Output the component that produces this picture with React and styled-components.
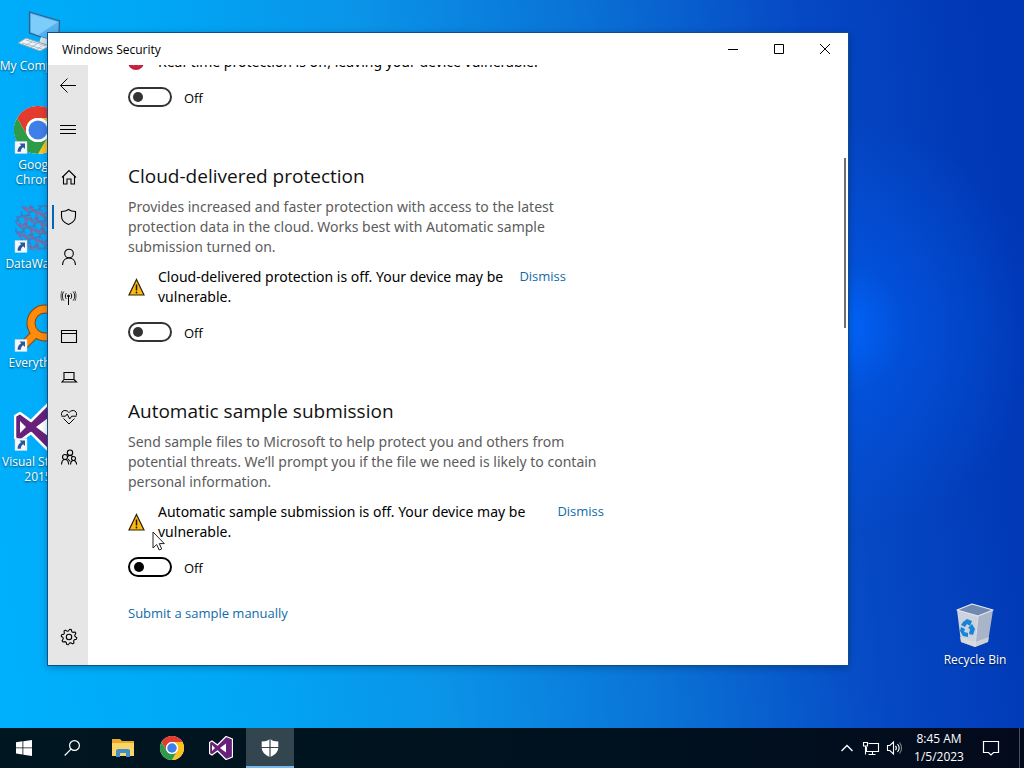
import React from "react";
import styled, { createGlobalStyle, css } from "styled-components";

const GlobalStyle = createGlobalStyle`
  *, *::before, *::after { box-sizing: border-box; }
  html, body { margin: 0; padding: 0; }
  body { font-family: "Open Sans", "Noto Sans", sans-serif; color: #000; }
  button { font: inherit; color: inherit; border: 0; padding: 0; background: none; }
  a { text-decoration: none; }
  h2, p { margin: 0; font-weight: 400; }
`;

const Screen = styled.div`
  display: flex;
  flex-direction: column;
  height: 100vh;
  overflow: hidden;
`;

const Desktop = styled.main`
  position: relative;
  flex: 1;
  min-height: 0;
  background:
    radial-gradient(circle at 82% 45%, rgba(0, 104, 255, 0.9) 0, rgba(0, 92, 240, 0.5) 7%, rgba(0, 70, 210, 0) 22%),
    linear-gradient(83deg, #00b0fc 0%, #00a8f6 20%, #0a94e8 40%, #0a72d6 60%, #0648c4 80%, #0037b4 96%);
`;

const IconColumn = styled.div`
  display: flex;
  flex-direction: column;
  width: 76px;
  padding-top: 7px;
`;

const BinSpot = styled.div`
  position: absolute;
  right: 11px;
  bottom: 54px;
  width: 76px;
`;

const DesktopButton = styled.button`
  display: flex;
  flex-direction: column;
  align-items: center;
  gap: 3px;
  width: 100%;
  height: ${(p) => (p.$short ? "73px" : "99px")};
  color: #fff;
  font-size: 12px;
  line-height: 15px;
  white-space: nowrap;
  text-shadow: 0 1px 2px rgba(0, 0, 0, 0.6);
  svg { display: block; flex: none; }
`;

const Window = styled.section`
  position: absolute;
  inset: 33px 176px 63px 48px;
  display: flex;
  flex-direction: column;
  background: #fff;
  box-shadow: 0 0 0 1px #0d4f8c, 0 2px 8px rgba(0, 0, 0, 0.3);
`;

const TitleBar = styled.header`
  display: flex;
  align-items: center;
  height: 32px;
  flex: none;
  padding-left: 14px;
  font-size: 12px;
`;

const Title = styled.span`
  flex: 1;
`;

const CaptionButton = styled.button`
  display: grid;
  place-items: center;
  width: 46px;
  height: 32px;
`;

const Body = styled.div`
  display: flex;
  flex: 1;
  min-height: 0;
`;

const Sidebar = styled.nav`
  display: flex;
  flex-direction: column;
  width: 40px;
  padding-bottom: 8px;
  background: #e6e6e6;
`;

const NavButton = styled.button`
  position: relative;
  display: grid;
  place-items: center;
  width: 40px;
  height: 40px;
  padding-left: ${(p) => (p.$plain ? "0" : "2px")};
  ${(p) => p.$gap && css`margin-top: ${p.$gap};`}
  ${(p) =>
    p.$active &&
    css`
      &::before {
        content: "";
        position: absolute;
        left: 4px;
        top: 8px;
        width: 2px;
        height: 24px;
        background: #0067b8;
      }
    `}
`;

const Content = styled.div`
  position: relative;
  flex: 1;
  min-width: 0;
  overflow: hidden;
  padding-left: 40px;
`;

const ScrollThumb = styled.div`
  position: absolute;
  right: 2px;
  top: 93px;
  width: 2px;
  height: 170px;
  background: #6e6e6e;
`;

const Scrolled = styled.div`
  display: flex;
  flex-direction: column;
  gap: 55px;
  margin-top: -13px;
`;

const Section = styled.section`
  max-width: ${(p) => p.$wide ? "476px" : "438px"};
`;

const Heading = styled.h2`
  font-size: 19px;
  line-height: 28px;
  color: #111;
  white-space: nowrap;
`;

const Description = styled.p`
  margin-top: 7px;
  font-family: "Noto Sans", "Open Sans", sans-serif;
  font-size: 14px;
  line-height: 20px;
  color: #5c5c5c;
  white-space: nowrap;
`;

const Alert = styled.div`
  display: flex;
  align-items: flex-start;
  margin-top: ${(p) => (p.$first ? "0" : "10px")};
  font-family: "Noto Sans", "Open Sans", sans-serif;
  font-size: 14px;
  line-height: 20px;
  white-space: nowrap;
`;

const AlertIcon = styled.span`
  display: flex;
  align-self: center;
  width: 30px;
`;

const AlertText = styled.p`
  flex: 1;
`;

const TextLink = styled.a`
  color: #0f6ba8;
  font-family: "Open Sans", "Noto Sans", sans-serif;
  font-size: 13px;
  line-height: ${(p) => (p.$raised ? "18px" : "20px")};
`;

const SubmitRow = styled.div`
  display: flex;
  margin-top: 26px;
`;

const ToggleLabel = styled.label`
  display: flex;
  align-items: center;
  gap: 12px;
  width: max-content;
  height: 20px;
  margin-top: 15px;
  font-size: 13px;
  line-height: 20px;
`;

const ToggleText = styled.span`
  padding-top: 2px;
`;

const ToggleInput = styled.input`
  appearance: none;
  display: flex;
  align-items: center;
  width: 44px;
  height: 20px;
  margin: 0;
  padding-left: ${(p) => (p.$hovered ? "4px" : "3px")};
  border: 2px solid ${(p) => (p.$hovered ? "#000" : "#333")};
  border-radius: 10px;
  &::before {
    content: "";
    width: 10px;
    height: 10px;
    border-radius: 50%;
    background: ${(p) => (p.$hovered ? "#000" : "#333")};
  }
`;

const Pointer = styled.svg`
  position: absolute;
  left: 152px;
  top: 531px;
`;

const Taskbar = styled.footer`
  display: flex;
  height: 40px;
  flex: none;
  background: linear-gradient(90deg, #001620, #00121f 60%, #030a1c);
  color: #fff;
`;

const TaskList = styled.div`
  display: flex;
  flex: 1;
`;

const PinnedApps = styled.div`
  display: flex;
  gap: 1px;
  margin-left: 3px;
`;

const TaskButton = styled.button`
  display: grid;
  place-items: center;
  width: 48px;
  height: 40px;
  border-bottom: 2px solid transparent;
  padding-top: 2px;
  ${(p) => p.$active && css`
    background: #33454f;
    border-bottom-color: #76b9ed;
  `}
`;

const Tray = styled.div`
  display: flex;
  align-items: stretch;
`;

const TrayButton = styled.button`
  display: grid;
  place-items: center;
  width: ${(p) => (p.$wide ? "48px" : "24px")};
`;

const Clock = styled.button`
  width: 56px;
  margin-left: 4px;
  font-size: 12px;
  line-height: 18px;
  text-align: center;
  white-space: nowrap;
`;

const ShowDesktop = styled.button`
  width: 5px;
  margin-left: 4px;
  border-left: 1px solid #44505c;
`;

const Line = ({ size = 18, w = 1.1, children }) => (
  <svg width={size} height={size} viewBox={`0 0 ${size} ${size}`} fill="none" stroke="currentColor" strokeWidth={w} aria-hidden="true">
    {children}
  </svg>
);

const BackIcon = () => <Line w={1}><path d="M17 9.500H1.500M8.500 2.500l-7 7 7 7" /></Line>;
const MenuIcon = () => <Line w={1}><path d="M1 5.500h16M1 9.500h16M1 13.500h16" /></Line>;
const HomeIcon = () => <Line><path d="M2 9.500 9 2.500l7 7M3.500 8v8h3.500v-5h4v5h3.500V8" /></Line>;
const ShieldIcon = () => <Line><path d="M8.500 1.500C6.500 3 4.200 3.500 1.500 3.500V8c0 4.300 2.800 6.900 7 8.500 4.200-1.600 7-4.200 7-8.500V3.500C12.800 3.500 10.500 3 8.500 1.500Z" /></Line>;
const PersonIcon = () => <Line><circle cx="9" cy="5.500" r="4.300" /><path d="M2.500 17c.2-4.200 2.800-7 6.500-7s6.300 2.800 6.500 7" /></Line>;
const AntennaIcon = () => (
  <Line w={1}>
    <circle cx="8.500" cy="8" r=".9" fill="currentColor" />
    <path d="M8.500 8v9M6.300 5.200c-1.300 1.500-1.300 4.200 0 5.700M10.700 5.200c1.300 1.500 1.300 4.200 0 5.700M3.900 3.600c-2.200 2.500-2.200 6.400 0 8.900M13.100 3.600c2.200 2.500 2.200 6.400 0 8.900" />
    <path d="M2 3C.6 5.800.6 10.200 2 13M15 3c1.400 2.800 1.400 7.200 0 10" opacity=".6" />
  </Line>
);
const AppWindowIcon = () => <Line><path d="M1.500 2.500h15v12h-15zM1.500 5.500h15" /></Line>;
const LaptopIcon = () => <Line><path d="M4 4.500h10v7H4zM4 11.500 2 14h14.500l-2.500-2.500" /></Line>;
const HeartIcon = () => (
  <Line w={1}>
    <path d="m3.500 10.500 5.500 5.500 5.500-5.500M1.700 7.500C.8 5 2.200 2.500 4.800 2.500 6.700 2.500 8 3.300 9 4.600c1-1.300 2.300-2.100 4.200-2.100 2.600 0 4 2.500 3.100 5" />
    <path d="M1.500 8.200h4L7.200 6l2.500 5 2-2.800h4.800" />
  </Line>
);
const FamilyIcon = () => (
  <Line w={1.1}>
    <circle cx="10" cy="4.700" r="2.700" />
    <circle cx="5" cy="9" r="2.500" />
    <circle cx="13.500" cy="10.500" r="2" />
    <path d="M1.500 16.500c.2-3 1.500-5 3.500-5s3.500 2 3.700 5M10.500 16.500c.2-2.300 1.300-4 3-4s2.900 1.700 3.100 4M10 7.500c-1 0-1.800.4-2.400 1.100M10 7.500c1.200 0 2.100.5 2.800 1.300M8 11l2.300 2.500" />
  </Line>
);
const gearPoints = Array.from({ length: 32 }, (_, i) => {
  const angle = ((i + 0.5) / 32) * Math.PI * 2;
  const radius = i % 4 < 2 ? 7.8 : 6;
  return `${(9 + Math.cos(angle) * radius).toFixed(2)},${(9 + Math.sin(angle) * radius).toFixed(2)}`;
}).join(" ");
const GearIcon = () => <Line w={1.1}><polygon points={gearPoints} strokeLinejoin="round" /><circle cx="9" cy="9" r="2.700" /></Line>;

const WarningIcon = () => (
  <svg width="17" height="18" viewBox="0 0 17 18" aria-hidden="true">
    <path d="M8.500 1.500 16 17H1Z" fill="#fdb913" stroke="#2b2410" strokeWidth="1.200" />
    <path d="M8.500 6.500v6" stroke="#1b1708" strokeWidth="1.500" />
    <circle cx="8.500" cy="14.500" r=".9" fill="#1b1708" />
  </svg>
);
const ErrorIcon = () => (
  <svg width="16" height="16" viewBox="0 0 16 16" aria-hidden="true">
    <circle cx="8" cy="8" r="8" fill="#c8203c" />
    <path d="m5 5 6 6m0-6-6 6" stroke="#fff" strokeWidth="1.400" />
  </svg>
);

const Shortcut = () => (
  <g>
    <path d="M1 35.500h12v12H1z" fill="#f4f8fc" stroke="#c5d5e5" strokeWidth=".5" />
    <path d="M5.500 37.500H11v5.500l-1.800-1.800c-1.500 1-2.300 2.400-2.400 4.600H3.500c0-3 1.200-5 3.700-6.600Z" fill="#2b579a" />
  </g>
);
const ChromeArt = () => (
  <g>
    <circle cx="24" cy="24" r="24" fill="#fff" />
    <path d="M3.200 12A24 24 0 0 1 44.800 12H24a12 12 0 0 0-10.400 18Z" fill="#e33b2e" />
    <path d="M44.800 12A24 24 0 0 1 24 48l10.400-18A12 12 0 0 0 24 12Z" fill="#fcc31e" />
    <path d="M24 48A24 24 0 0 1 3.200 12l10.400 18A12 12 0 0 0 34.400 30Z" fill="#2d9b47" />
    <circle cx="24" cy="24" r="12" fill="#fff" />
    <circle cx="24" cy="24" r="9.500" fill="#3f7fe8" />
  </g>
);
const StudioArt = () => (
  <g strokeLinejoin="round">
    <path d="M34 1 47 6v36l-13 5-17-17L6 38 1 35V13l5-3 11 8Z" fill="#68217a" stroke="#fff" strokeWidth="2.500" />
    <path d="M34 15v18L22 24ZM6 18v12l6-6Z" fill="#fff" />
  </g>
);

const ComputerIcon = () => (
  <svg width="48" height="48" viewBox="0 0 48 48" aria-hidden="true">
    <path d="m15.500 5 30 9-1 22-29-10Z" fill="#54b4f2" stroke="#355f83" strokeWidth="1.200" />
    <path d="m17 7 27 8-20 13-7-3Z" fill="#9bdcff" opacity=".6" />
    <path d="m27 30 10 3v6l-12-3Z" fill="#d4e4ee" />
    <path d="m4 36 8-5 24 8-10 5Z" fill="#edf3f6" stroke="#8aa3b5" />
    <path d="m8 36 20 6m-16-9 20 6m-14-4-6 3m11-1-6 3m11-1-5 3" stroke="#9bb2c0" strokeWidth=".8" />
  </svg>
);
const ChromeDesktopIcon = () => <svg width="48" height="48" viewBox="0 0 48 48" aria-hidden="true"><ChromeArt /><Shortcut /></svg>;
const meshCells = Array.from({ length: 64 }, (_, i) => ({
  x: 2 + (i % 8) * 5.5,
  y: 1 + Math.floor(i / 8) * 5.5,
  kind: (i * 7 + Math.floor(i / 8) * 3) % 5,
})).filter(({ x, y }) => Math.hypot(x - 22, y - 20) < 24);
const meshShapes = ["h4v4", "v4h4", "l4 4v-4", "h4l-4 4h4", "m0 4 4-4v4"];
const meshPath = (parity) =>
  meshCells.filter((c) => c.kind % 2 === parity).map((c) => `M${c.x} ${c.y}${meshShapes[c.kind]}`).join("");
const MeshIcon = () => (
  <svg width="48" height="48" viewBox="0 0 48 48" fill="none" strokeWidth="1.600" aria-hidden="true">
    <path d={meshPath(0)} stroke="#7d63a4" opacity=".9" />
    <path d={meshPath(1)} stroke="#4577b8" opacity=".9" />
    <path d={meshPath(0)} transform="translate(2 2)" stroke="#a8607f" strokeWidth="1" opacity=".8" />
    <Shortcut />
  </svg>
);
const EverythingIcon = () => (
  <svg width="48" height="48" viewBox="0 0 48 48" fill="none" aria-hidden="true">
    <circle cx="31" cy="19" r="14" stroke="#7c4a14" strokeWidth="9" />
    <path d="M21 30 10 41" stroke="#7c4a14" strokeWidth="9" />
    <circle cx="31" cy="19" r="14" stroke="#ff8a0c" strokeWidth="7" />
    <path d="M22 29 10 41" stroke="#ff8a0c" strokeWidth="7" />
    <Shortcut />
  </svg>
);
const StudioDesktopIcon = () => <svg width="48" height="48" viewBox="0 0 48 48" aria-hidden="true"><StudioArt /><Shortcut /></svg>;
const BinIcon = () => (
  <svg width="48" height="48" viewBox="0 0 48 48" aria-hidden="true">
    <path d="m6 9 21 6-3 31-14-5Z" fill="#ccd2de" />
    <path d="m27 15 15-6-5 32-13 5Z" fill="#aab4c8" />
    <path d="m6 9 15-6 21 6-15 6Z" fill="#7189b0" stroke="#e8edf3" strokeWidth="1.200" strokeLinejoin="round" />
    <path d="M27 15 24 46" stroke="#dfe4ec" />
    <path d="m9 36 15 5 14-5-1 5-13 5-14-5Z" fill="#dededa" opacity=".7" />
    <g fill="#1684d8">
      <path d="m12 21 4-3 5 2-2 5-3-2-2 3-4-2Z" />
      <path d="m21 23 3 5-2 6-4-1 1-5-2-1Z" />
      <path d="m10 26 4 2-1 3 4 1v4l-5-1-3-5Z" />
    </g>
  </svg>
);

const StartIcon = () => (
  <svg width="16" height="16" viewBox="0 0 16 16" fill="#fff" aria-hidden="true">
    <path d="m0 2.200 6.500-.9v6.200H0ZM7.300 1.200 16 0v7.500H7.300ZM0 8.300h6.500v6.200L0 13.600ZM7.300 8.300H16V16l-8.700-1.300Z" />
  </svg>
);
const SearchIcon = () => <Line size={16} w={1.2}><circle cx="10.500" cy="5.500" r="4.900" /><path d="M7 9.200.7 15.500" /></Line>;
const FolderIcon = () => (
  <svg width="22" height="18" viewBox="0 0 22 18" aria-hidden="true">
    <path d="M0 0h8l2 2h12v15H0Z" fill="#e8a92c" />
    <path d="M0 4h22v13H0Z" fill="#fbd667" />
    <path d="M4 18v-7l2-1h10l2 1v7h-4v-4H8v4Z" fill="#3d8fce" />
  </svg>
);
const DefenderIcon = () => (
  <svg width="18" height="18" viewBox="0 0 18 18" aria-hidden="true">
    <path d="M9 0c2 1.700 4.700 2.500 8.300 2.500V8c0 5-3.300 8-8.300 10C4 16 .7 13 .7 8V2.500C4.300 2.500 7 1.700 9 0Z" fill="#fff" />
    <path d="M9 0v18M0 8.500h18" stroke="#33454f" strokeWidth="1.200" />
  </svg>
);
const ChevronIcon = () => <Line size={14} w={1.4}><path d="m1.500 10 5.500-5.500 5.500 5.500" /></Line>;
const NetworkIcon = () => <Line size={18}><path d="M6.500 4.500h10v8H4.500V8M1.500 3.500h4v3.500h-4zM3.500 7v8.500M10.500 12.500v3M6.500 15.500h7" /></Line>;
const SpeakerIcon = () => (
  <Line size={18} w={1.1}>
    <path d="M1.500 6.500h2.300L7.500 3v12l-3.700-3.500H1.500ZM9.500 6.800c1 1.300 1 3.200 0 4.400M11.500 5c1.900 2.300 1.900 5.700 0 8" />
    <path d="M13.500 3.500c2.700 3.200 2.700 7.800 0 11" opacity=".5" />
  </Line>
);
const MessageIcon = () => <Line size={18} w={1.2}><path d="M1.500 2.500h15v11h-5L9 16l-2.500-2.500h-5Z" /></Line>;

const desktopItems = [
  { icon: <ComputerIcon />, label: "My Computer" },
  { icon: <ChromeDesktopIcon />, label: <>Google<br />Chrome</> },
  { icon: <MeshIcon />, label: "DataWagon" },
  { icon: <EverythingIcon />, label: "Everything" },
  { icon: <StudioDesktopIcon />, label: <>Visual Studio<br />2015</> },
];

const navItems = [
  { name: "Back", icon: <BackIcon />, plain: true },
  { name: "Open navigation", icon: <MenuIcon />, gap: "4px", plain: true },
  { name: "Home", icon: <HomeIcon />, gap: "8px" },
  { name: "Virus & threat protection", icon: <ShieldIcon />, active: true },
  { name: "Account protection", icon: <PersonIcon /> },
  { name: "Firewall & network protection", icon: <AntennaIcon /> },
  { name: "App & browser control", icon: <AppWindowIcon /> },
  { name: "Device security", icon: <LaptopIcon /> },
  { name: "Device performance & health", icon: <HeartIcon /> },
  { name: "Family options", icon: <FamilyIcon /> },
  { name: "Settings", icon: <GearIcon />, gap: "auto" },
];

function Toggle({ id, name, hovered }) {
  return (
    <ToggleLabel htmlFor={id}>
      <ToggleInput id={id} type="checkbox" role="switch" aria-label={name} $hovered={hovered} />
      <ToggleText>Off</ToggleText>
    </ToggleLabel>
  );
}

export default function App() {
  return (
    <Screen>
      <GlobalStyle />
      <Desktop>
        <IconColumn>
          {desktopItems.map((item, i) => (
            <DesktopButton key={i}>{item.icon}<span>{item.label}</span></DesktopButton>
          ))}
        </IconColumn>
        <BinSpot>
          <DesktopButton $short><BinIcon /><span>Recycle Bin</span></DesktopButton>
        </BinSpot>

        <Window aria-label="Windows Security">
          <TitleBar>
            <Title>Windows Security</Title>
            <CaptionButton aria-label="Minimize"><Line size={10} w={1}><path d="M0 5.500h10" /></Line></CaptionButton>
            <CaptionButton aria-label="Maximize"><Line size={10} w={1}><path d="M.5.5h9v9h-9z" /></Line></CaptionButton>
            <CaptionButton aria-label="Close"><Line size={10} w={1}><path d="m0 0 10 10M10 0 0 10" /></Line></CaptionButton>
          </TitleBar>
          <Body>
            <Sidebar>
              {navItems.map((item) => (
                <NavButton key={item.name} aria-label={item.name} $gap={item.gap} $active={item.active} $plain={item.plain}>
                  {item.icon}
                </NavButton>
              ))}
            </Sidebar>
            <Content>
              <Scrolled>
                <Section>
                  <Alert $first>
                    <AlertIcon><ErrorIcon /></AlertIcon>
                    <AlertText>Real-time protection is off, leaving your device vulnerable.</AlertText>
                  </Alert>
                  <Toggle id="realtime" name="Real-time protection" />
                </Section>
                <Section>
                  <Heading>Cloud-delivered protection</Heading>
                  <Description>
                    Provides increased and faster protection with access to the latest<br />
                    protection data in the cloud. Works best with Automatic sample<br />
                    submission turned on.
                  </Description>
                  <Alert>
                    <AlertIcon><WarningIcon /></AlertIcon>
                    <AlertText>Cloud-delivered protection is off. Your device may be<br />vulnerable.</AlertText>
                    <TextLink href="#dismiss-cloud" $raised>Dismiss</TextLink>
                  </Alert>
                  <Toggle id="cloud" name="Cloud-delivered protection" />
                </Section>
                <Section $wide>
                  <Heading>Automatic sample submission</Heading>
                  <Description>
                    Send sample files to Microsoft to help protect you and others from<br />
                    potential threats. We’ll prompt you if the file we need is likely to contain<br />
                    personal information.
                  </Description>
                  <Alert>
                    <AlertIcon><WarningIcon /></AlertIcon>
                    <AlertText>Automatic sample submission is off. Your device may be<br />vulnerable.</AlertText>
                    <TextLink href="#dismiss-samples" $raised>Dismiss</TextLink>
                  </Alert>
                  <Toggle id="samples" name="Automatic sample submission" hovered />
                  <SubmitRow><TextLink href="#submit">Submit a sample manually</TextLink></SubmitRow>
                </Section>
              </Scrolled>
              <ScrollThumb />
            </Content>
          </Body>
        </Window>

        <Pointer width="14" height="21" viewBox="0 0 14 21" aria-hidden="true">
          <path d="M1 1v16l3.700-3.500L7.200 19l2.500-1.100-2.400-5.300h5Z" fill="#fff" stroke="#222" />
        </Pointer>
      </Desktop>

      <Taskbar>
        <TaskList>
          <TaskButton aria-label="Start"><StartIcon /></TaskButton>
          <TaskButton aria-label="Search"><SearchIcon /></TaskButton>
          <PinnedApps>
            <TaskButton aria-label="File Explorer"><FolderIcon /></TaskButton>
            <TaskButton aria-label="Google Chrome"><svg width="24" height="24" viewBox="0 0 48 48" aria-hidden="true"><ChromeArt /></svg></TaskButton>
            <TaskButton aria-label="Visual Studio"><svg width="24" height="24" viewBox="0 0 48 48" aria-hidden="true"><StudioArt /></svg></TaskButton>
            <TaskButton aria-label="Windows Security" $active><DefenderIcon /></TaskButton>
          </PinnedApps>
        </TaskList>
        <Tray>
          <TrayButton aria-label="Show hidden icons"><ChevronIcon /></TrayButton>
          <TrayButton aria-label="Network"><NetworkIcon /></TrayButton>
          <TrayButton aria-label="Volume"><SpeakerIcon /></TrayButton>
          <Clock>8:45 AM<br />1/5/2023</Clock>
          <TrayButton aria-label="Notifications" $wide><MessageIcon /></TrayButton>
          <ShowDesktop aria-label="Show desktop" />
        </Tray>
      </Taskbar>
    </Screen>
  );
}
